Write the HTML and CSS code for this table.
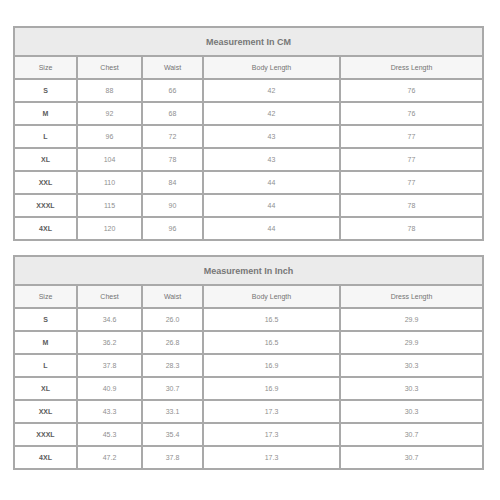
FILE: index.html
```html
<!DOCTYPE html>
<html>
<head>
<meta charset="utf-8">
<link rel="stylesheet" href="styles.css">
</head>
<body>
<div class="page">
  <table class="chart">
    <colgroup><col class="c-size"><col class="c-chest"><col class="c-waist"><col class="c-body"><col class="c-dress"></colgroup>
    <tr class="title"><th colspan="5">Measurement In CM</th></tr>
    <tr class="head"><th>Size</th><th>Chest</th><th>Waist</th><th>Body Length</th><th>Dress Length</th></tr>
    <tr><td class="sz">S</td><td>88</td><td>66</td><td>42</td><td>76</td></tr>
    <tr><td class="sz">M</td><td>92</td><td>68</td><td>42</td><td>76</td></tr>
    <tr><td class="sz">L</td><td>96</td><td>72</td><td>43</td><td>77</td></tr>
    <tr><td class="sz">XL</td><td>104</td><td>78</td><td>43</td><td>77</td></tr>
    <tr><td class="sz">XXL</td><td>110</td><td>84</td><td>44</td><td>77</td></tr>
    <tr><td class="sz">XXXL</td><td>115</td><td>90</td><td>44</td><td>78</td></tr>
    <tr><td class="sz">4XL</td><td>120</td><td>96</td><td>44</td><td>78</td></tr>
  </table>
  <table class="chart">
    <colgroup><col class="c-size"><col class="c-chest"><col class="c-waist"><col class="c-body"><col class="c-dress"></colgroup>
    <tr class="title"><th colspan="5">Measurement In Inch</th></tr>
    <tr class="head"><th>Size</th><th>Chest</th><th>Waist</th><th>Body Length</th><th>Dress Length</th></tr>
    <tr><td class="sz">S</td><td>34.6</td><td>26.0</td><td>16.5</td><td>29.9</td></tr>
    <tr><td class="sz">M</td><td>36.2</td><td>26.8</td><td>16.5</td><td>29.9</td></tr>
    <tr><td class="sz">L</td><td>37.8</td><td>28.3</td><td>16.9</td><td>30.3</td></tr>
    <tr><td class="sz">XL</td><td>40.9</td><td>30.7</td><td>16.9</td><td>30.3</td></tr>
    <tr><td class="sz">XXL</td><td>43.3</td><td>33.1</td><td>17.3</td><td>30.3</td></tr>
    <tr><td class="sz">XXXL</td><td>45.3</td><td>35.4</td><td>17.3</td><td>30.7</td></tr>
    <tr><td class="sz">4XL</td><td>47.2</td><td>37.8</td><td>17.3</td><td>30.7</td></tr>
  </table>
</div>
</body>
</html>
```
FILE: styles.css
```css
html, body {
  margin: 0;
  padding: 0;
  background: #fff;
}
.page {
  padding: 26px 0 0 13px;
  display: flex;
  flex-direction: column;
  gap: 14px;
  font-family: "Liberation Sans", Arial, sans-serif;
}
.chart {
  width: 469px;
  table-layout: fixed;
  border-collapse: collapse;
  border: 2px solid #a9a9a9;
}
.c-size { width: 63px; }
.c-chest { width: 65px; }
.c-waist { width: 61px; }
.c-body { width: 137px; }
.c-dress { width: 143px; }
.chart th, .chart td {
  border: 2px solid #a9a9a9;
  text-align: center;
  padding: 0;
  height: 21px;
  font-size: 7px;
  font-weight: normal;
  color: #8f8f8f;
}
.chart .title th {
  height: 27px;
  background: #ebebeb;
  font-size: 9px;
  font-weight: bold;
  color: #777;
}
.chart .head th {
  background: #f6f6f6;
  color: #737373;
  height: 21px;
}
.chart td.sz {
  font-weight: bold;
  color: #5c5c5c;
}
```
